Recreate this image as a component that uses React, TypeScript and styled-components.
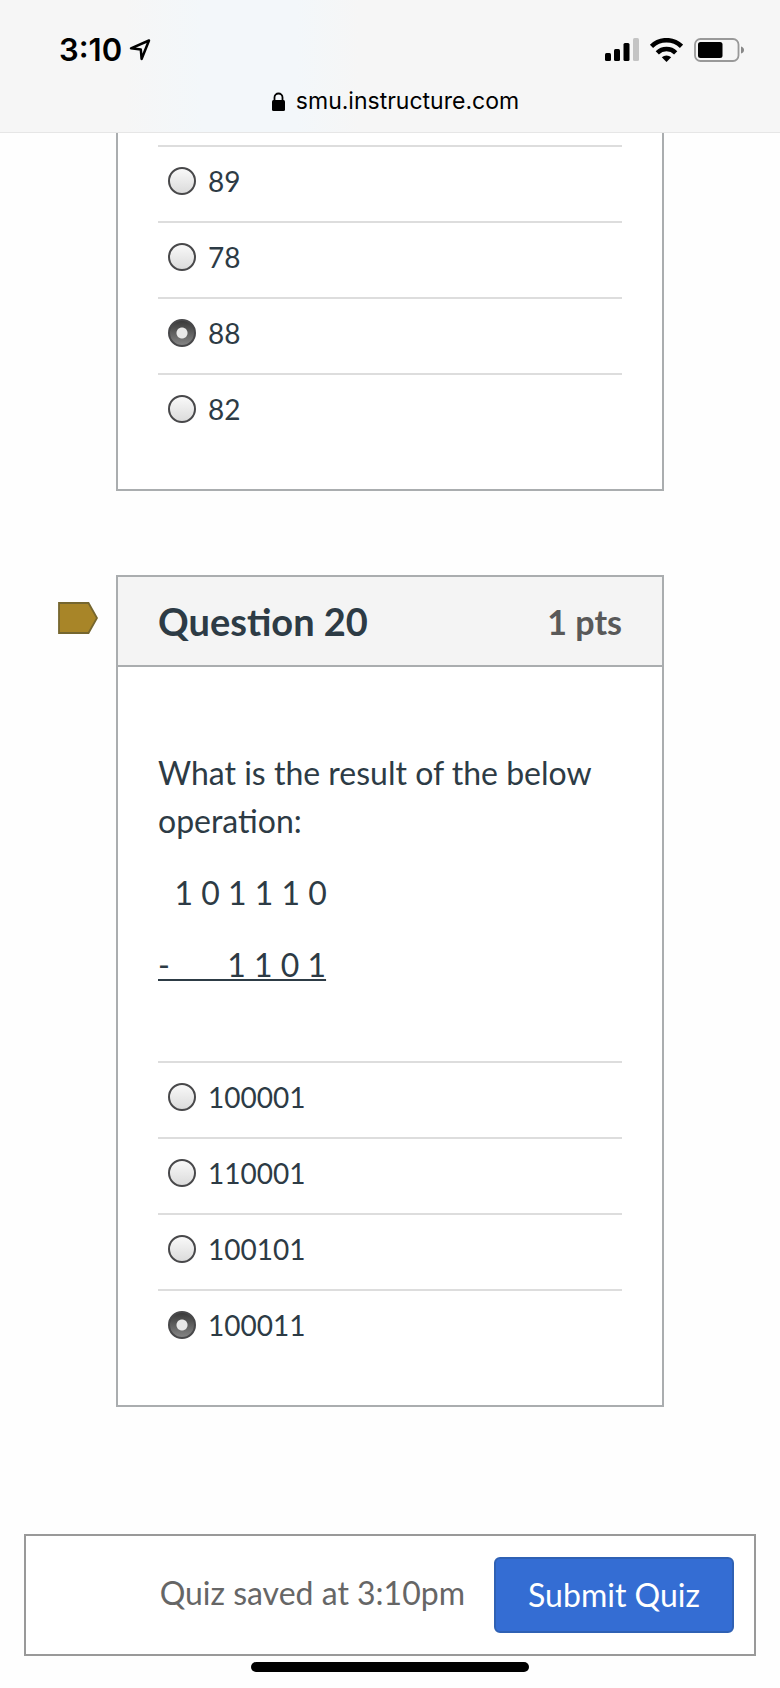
import React from "react";
import styled, { createGlobalStyle } from "styled-components";

const GlobalStyle = createGlobalStyle`
  * { box-sizing: border-box; }
  body {
    margin: 0;
    background: #fefefe;
    color: #2d3b45;
    font-family: Lato, "Liberation Sans", sans-serif;
  }
`;

const Page = styled.div`
  display: flex;
  flex-direction: column;
  min-height: 100vh;
`;

const TopBar = styled.header`
  height: 133px;
  padding: 30px 36px 0 59px;
  border-bottom: 1px solid #e6e6e6;
  background: linear-gradient(90deg, #f6f6f6 16%, #f3f7fa 26%, #f3f7fa 38%, #f6f6f6 46%);
  color: #000;
  font-family: Inter, "Liberation Sans", sans-serif;
`;

const StatusRow = styled.div`
  display: flex;
  justify-content: space-between;
  align-items: center;
  height: 40px;
`;

const Clock = styled.div`
  display: flex;
  align-items: center;
  gap: 7px;
  font-size: 31px;
  font-weight: 600;
  line-height: 40px;
`;

const StatusIcons = styled.div`
  display: flex;
  align-items: center;
  gap: 10px;
`;

const Address = styled.div`
  display: flex;
  justify-content: center;
  align-items: center;
  gap: 11px;
  height: 62px;
  padding-right: 12px;
  font-size: 23px;
  line-height: 30px;
`;

const Lane = styled.section`
  display: grid;
  grid-template-columns: 116px minmax(0, 1fr) 116px;
  align-items: start;
`;

const FlagButton = styled.button`
  grid-column: 1;
  width: 40px;
  height: 32px;
  margin: 27px 0 0 58px;
  padding: 0;
  border: 0;
  background: none;
  svg { display: block; }
`;

const Card = styled.article<{ $continued?: boolean }>`
  grid-column: 2;
  border: 2px solid #aaadaf;
  border-top-width: ${(p) => (p.$continued ? 0 : 2)}px;
  padding-top: ${(p) => (p.$continued ? 12 : 0)}px;
  background: #fff;
`;

const CardHeader = styled.div`
  display: flex;
  justify-content: space-between;
  align-items: center;
  height: 90px;
  padding: 0 40px;
  border-bottom: 2px solid #aaadaf;
  background: #f4f4f4;
`;

const Title = styled.h2`
  margin: 0;
  font-size: 38px;
  line-height: 48px;
  font-weight: 700;
`;

const Points = styled.span`
  padding-top: 2px;
  color: #595959;
  font-size: 34px;
  line-height: 40px;
  font-weight: 700;
`;

const Prompt = styled.div`
  padding: 82px 40px 48px;
  font-size: 32px;
  line-height: 48px;
  p { margin: 0 0 24px; }
`;

const Operation = styled.p`
  white-space: pre;
  u { text-decoration-thickness: 2px; text-underline-offset: 2px; text-decoration-skip-ink: none; }
`;

const Answers = styled.fieldset`
  margin: 0 40px;
  padding: 0 0 40px;
  border: 0;
`;

const Answer = styled.label`
  display: flex;
  align-items: center;
  gap: 12px;
  height: 76px;
  padding: 0 0 6px 10px;
  border-top: 2px solid #dddddd;
  font-size: 28px;
  line-height: 34px;
`;

const Radio = styled.input`
  appearance: none;
  width: 28px;
  height: 28px;
  margin: 0;
  border: 2px solid #48484a;
  border-radius: 50%;
  background: linear-gradient(#fbfbfb, #d9d9d9) border-box;
  &:checked {
    background:
      radial-gradient(circle, #e8e8e8 5px, transparent 6px),
      linear-gradient(#3a3a3a, #848484);
  }
`;

const SubmitBar = styled.footer`
  display: flex;
  justify-content: flex-end;
  align-items: center;
  gap: 29px;
  height: 122px;
  margin: 127px 24px 0;
  padding: 0 20px;
  border: 2px solid #999;
  background: #fff;
`;

const Saved = styled.span`
  padding-bottom: 4px;
  color: #666;
  font-size: 32px;
  line-height: 40px;
`;

const Submit = styled.button`
  width: 240px;
  height: 76px;
  padding: 0;
  border: 2px solid #2f61b4;
  border-radius: 6px;
  background: #346dd3;
  color: #fff;
  font: 400 32px/40px Lato, "Liberation Sans", sans-serif;
`;

const HomeIndicator = styled.div`
  width: 278px;
  height: 10px;
  margin: 6px auto 16px;
  border-radius: 5px;
  background: #000;
`;

const Questions = styled.main`
  display: flex;
  flex-direction: column;
  gap: 84px;
`;

function AnswerList({ name, options, selected }: { name: string; options: string[]; selected: string }) {
  return (
    <Answers aria-label={name}>
      {options.map((o) => (
        <Answer key={o}>
          <Radio type="radio" name={name} value={o} defaultChecked={o === selected} />
          {o}
        </Answer>
      ))}
    </Answers>
  );
}

export default function App() {
  return (
    <Page>
      <GlobalStyle />
      <TopBar>
        <StatusRow>
          <Clock>
            3:10
            <svg width="22" height="22" viewBox="0 0 22 22" fill="none" stroke="#000" strokeWidth="2.5" strokeLinejoin="round">
              <path d="M20 1.500 2 9.300l9.800 1.200L12.600 20Z" />
            </svg>
          </Clock>
          <StatusIcons>
            <svg width="36" height="24" viewBox="0 0 36 24">
              <rect x="2" y="15" width="6" height="8" rx="1.500" />
              <rect x="11" y="11" width="6" height="12" rx="1.500" />
              <rect x="20.500" y="5" width="6" height="18" rx="1.500" />
              <rect x="30" y="0" width="6" height="23" rx="1.500" fill="#c4c4c4" />
            </svg>
            <svg width="34" height="24" viewBox="0 0 34 24" fill="none" stroke="#000" strokeWidth="4.600">
              <path d="M2.500 8.300a21.500 21.500 0 0 1 30 0" />
              <path d="M8.300 14.800a13.200 13.200 0 0 1 18.400 0" />
              <path d="M12.800 19.200a7.200 7.200 0 0 1 9.400 0L17.500 24Z" fill="#000" stroke="none" />
            </svg>
            <svg width="51" height="24" viewBox="0 0 51 24">
              <rect x="2" y="1" width="43.500" height="22" rx="5.500" fill="none" stroke="#999" strokeWidth="1.800" />
              <rect x="5" y="4" width="24.500" height="16" rx="2.500" />
              <path d="M48 8.500q3 1 3 3.500t-3 3.500Z" fill="#888" />
            </svg>
          </StatusIcons>
        </StatusRow>
        <Address>
          <svg width="13" height="19" viewBox="0 0 13 19">
            <rect x="0" y="8" width="13" height="11" rx="1.500" />
            <path d="M2.500 9V5.500a4 4 0 0 1 8 0V9" fill="none" stroke="#000" strokeWidth="1.800" />
          </svg>
          smu.instructure.com
        </Address>
      </TopBar>

      <Questions>
        <Lane>
          <Card $continued>
            <AnswerList name="Question 19" options={["89", "78", "88", "82"]} selected="88" />
          </Card>
        </Lane>
        <Lane>
          <FlagButton aria-label="Flag question">
            <svg width="40" height="32" viewBox="0 0 40 32">
              <path d="M1 1h29.500L39 16l-8.500 15H1Z" fill="#a88528" stroke="#75662f" strokeWidth="1.800" />
            </svg>
          </FlagButton>
          <Card>
            <CardHeader>
              <Title>Question 20</Title>
              <Points>1 pts</Points>
            </CardHeader>
            <Prompt>
              <p>What is the result of the below operation:</p>
              <Operation>{"\u00a0 1 0 1 1 1 0"}</Operation>
              <Operation><u>{"-\u00a0 \u00a0 \u00a0 \u00a01 1 0 1"}</u></Operation>
            </Prompt>
            <AnswerList name="Question 20" options={["100001", "110001", "100101", "100011"]} selected="100011" />
          </Card>
        </Lane>
      </Questions>

      <SubmitBar>
        <Saved>Quiz saved at 3:10pm</Saved>
        <Submit>Submit Quiz</Submit>
      </SubmitBar>
      <HomeIndicator />
    </Page>
  );
}
